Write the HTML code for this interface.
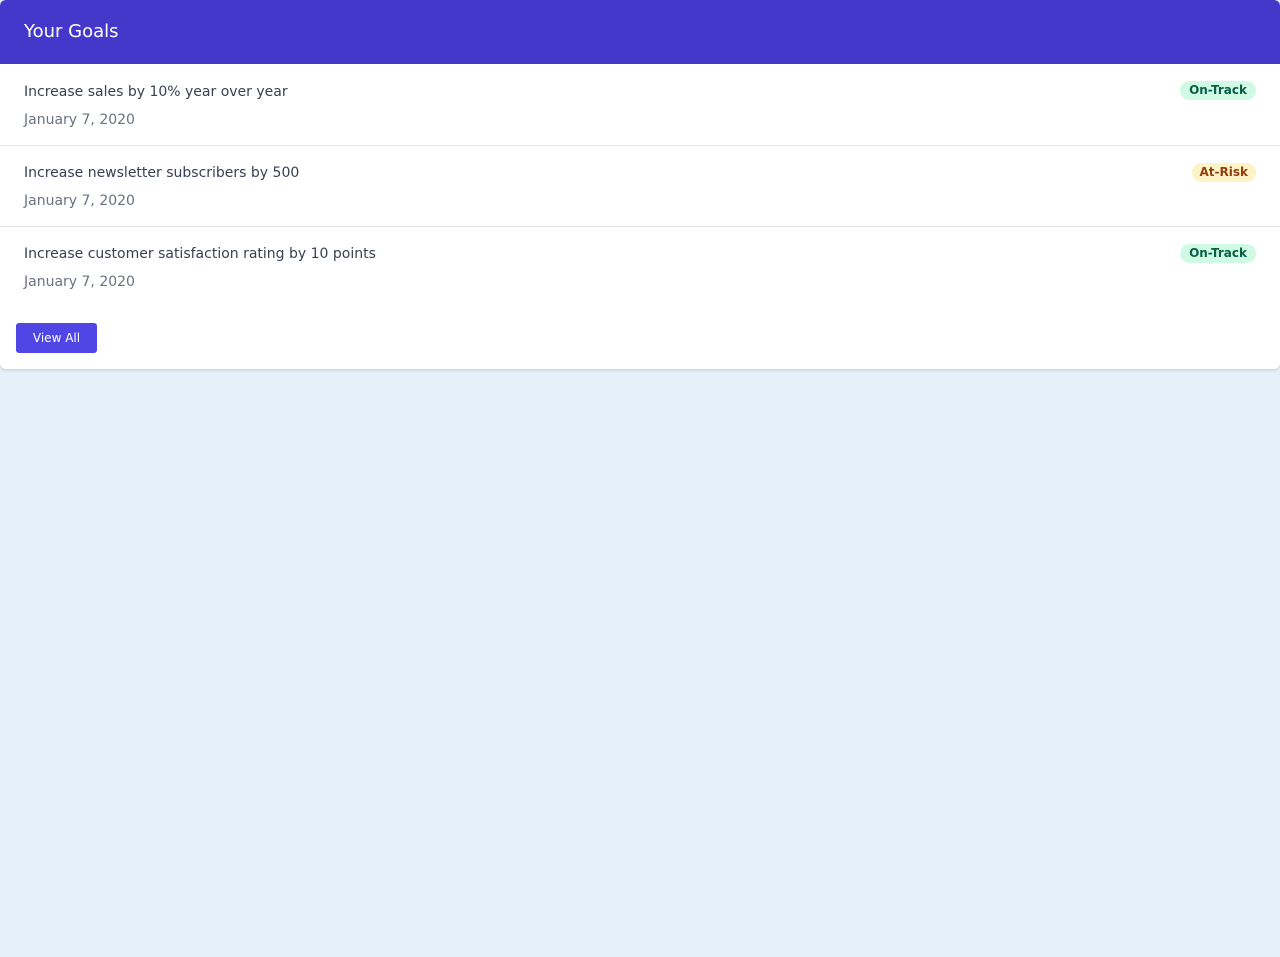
<!DOCTYPE html>
<html><head><style>
body{margin:0;background:#e6f0fa;font-family:"DejaVu Sans",sans-serif;}
.card{position:absolute;left:0;top:0;width:1280px;height:369px;background:#fff;border-radius:6px;box-shadow:0 1px 3px rgba(0,0,0,.15);overflow:hidden}
.hd{height:64px;background:#4338ca;color:#fff;font-size:18px;line-height:64px;padding-left:24px}
.row{position:relative;height:80px;border-bottom:1px solid #e5e7eb}
.row.first{height:81px}
.row.last{border-bottom:none}
.t{position:absolute;left:24px;top:19px;font-size:14px;color:#374151}
.d{position:absolute;left:24px;top:47px;font-size:14px;color:#6b7280}
.b{position:absolute;right:24px;top:17px;font-size:12px;font-weight:bold;padding:0 9px;height:19px;line-height:19px;border-radius:10px}
.first .t{top:20px}.first .d{top:48px}.first .b{top:17px}
.g{background:#d1fae5;color:#065f46}
.y{background:#fef3c7;color:#92400e;padding:0 8px}
.btn{position:absolute;left:16px;top:323px;width:81px;height:30px;background:#4f46e5;color:#fff;border-radius:3px;font-size:12px;line-height:30px;text-align:center}
</style></head><body>
<div class="card">
<div class="hd">Your Goals</div>
<div class="row first"><div class="t">Increase sales by 10% year over year</div><div class="d">January 7, 2020</div><div class="b g">On-Track</div></div>
<div class="row"><div class="t">Increase newsletter subscribers by 500</div><div class="d">January 7, 2020</div><div class="b y">At-Risk</div></div>
<div class="row last"><div class="t">Increase customer satisfaction rating by 10 points</div><div class="d">January 7, 2020</div><div class="b g">On-Track</div></div>
<div class="btn">View All</div>
</div>
</body></html>
